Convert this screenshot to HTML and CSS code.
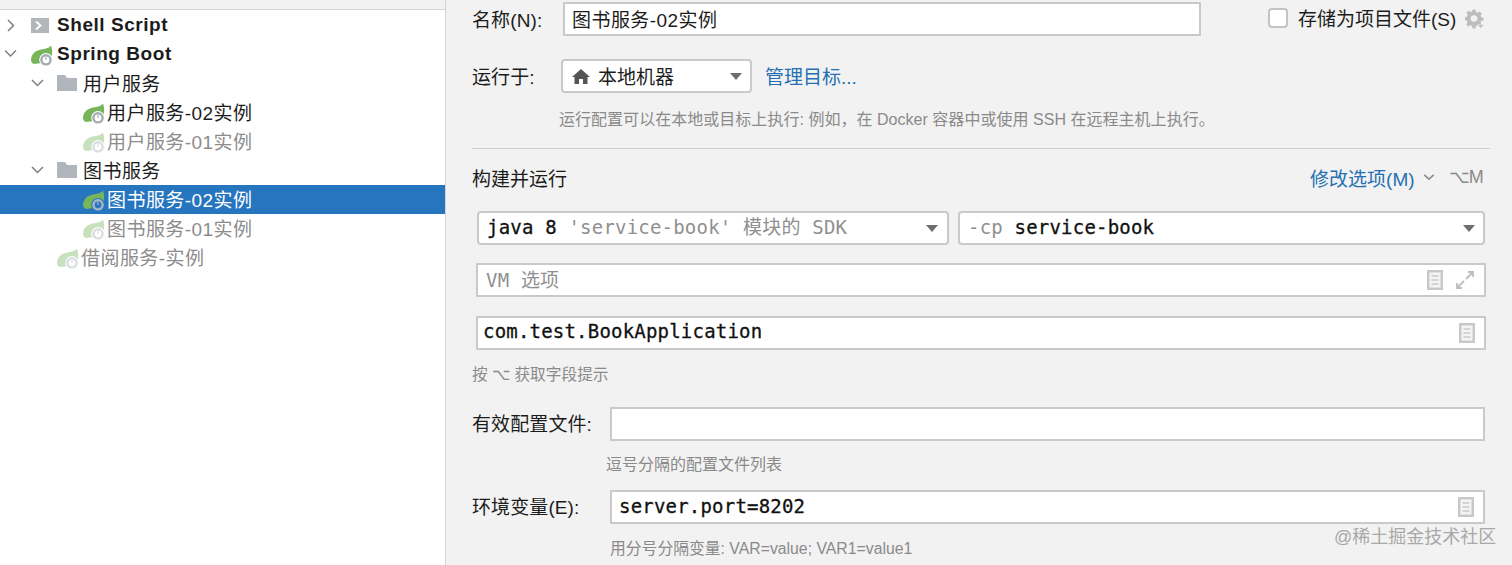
FILE: index.html
```html
<!DOCTYPE html>
<html lang="zh">
<head>
<meta charset="utf-8">
<title>运行配置</title>
<link rel="stylesheet" href="styles.css">
</head>
<body>
<svg class="defs" width="0" height="0" aria-hidden="true">
  <symbol id="spring" viewBox="0 0 22 22">
    <path class="leaf" d="M0 16.500C0 9.500 5 6.500 10 5.500 14 4.800 17.500 4.500 20 1.500 22 8 21.500 13 18 18L3 20C1.500 19.500 .3 18 0 16.500Z"/>
    <circle class="halo" cx="15" cy="15.800" r="6.800"/>
    <circle class="ring" cx="15" cy="15.800" r="5.800"/>
    <circle class="hole" cx="15" cy="15.800" r="3.400"/>
    <path class="tick" d="M15 13v3"/>
  </symbol>
  <symbol id="chev-down" viewBox="0 0 14 8"><path d="M1.500 1.500 7 6.500l5.500-5"/></symbol>
  <symbol id="doc" viewBox="0 0 16 20">
    <rect class="doc-frame" x="1.200" y="1.200" width="13.600" height="17.600"/>
    <path class="doc-lines" d="M4.500 6h7M4.500 10h7M4.500 14h7"/>
  </symbol>
</svg>

<aside class="tree">
  <div class="tree-top"></div>
  <ul class="tree-list">
    <li class="row lv0 strong">
      <svg class="tw" viewBox="0 0 26 29"><path d="M3 9 8.500 14.500 3 20"/></svg>
      <svg class="ico-shell" viewBox="0 0 18 15"><rect width="18" height="15"/><path d="M5 3.500 9.500 7.500 5 11.500"/></svg>
      <span>Shell Script</span>
    </li>
    <li class="row lv0 strong">
      <svg class="tw" viewBox="0 0 26 29"><path d="M0 10.500 5.500 16 11 10.500"/></svg>
      <svg class="ico-spring"><use href="#spring"/></svg>
      <span>Spring Boot</span>
    </li>
    <li class="row lv1">
      <svg class="tw" viewBox="0 0 26 29"><path d="M1 11 6.500 16.500 12 11"/></svg>
      <svg class="ico-folder" viewBox="0 0 20 16"><path d="M0 0h8l2 3h10v13H0Z"/></svg>
      <span>用户服务</span>
    </li>
    <li class="row lv2">
      <svg class="ico-child"><use href="#spring"/></svg>
      <span>用户服务-02实例</span>
    </li>
    <li class="row lv2 off">
      <svg class="ico-child"><use href="#spring"/></svg>
      <span>用户服务-01实例</span>
    </li>
    <li class="row lv1">
      <svg class="tw" viewBox="0 0 26 29"><path d="M1 11 6.500 16.500 12 11"/></svg>
      <svg class="ico-folder" viewBox="0 0 20 16"><path d="M0 0h8l2 3h10v13H0Z"/></svg>
      <span>图书服务</span>
    </li>
    <li class="row lv2 selected">
      <svg class="ico-child"><use href="#spring"/></svg>
      <span>图书服务-02实例</span>
    </li>
    <li class="row lv2 off">
      <svg class="ico-child"><use href="#spring"/></svg>
      <span>图书服务-01实例</span>
    </li>
    <li class="row lv1b off">
      <svg class="ico-child"><use href="#spring"/></svg>
      <span>借阅服务-实例</span>
    </li>
  </ul>
</aside>

<main class="form">
  <div class="field f-name">
    <label class="lbl lbl-name">名称(N):</label>
    <div class="input input-name"><span class="grow">图书服务-02实例</span></div>
    <span class="check"></span>
    <span class="check-text">存储为项目文件(S)</span>
    <svg class="gear" viewBox="0 0 20 20">
      <path d="M8 0h3l.5 2.600 1.800.8L15.500 2l2.200 2.200-1.400 2.200.7 1.800 2.500.5v3l-2.500.5-.7 1.800 1 1.500H14l-1 1-1.500 1.200L11 20H8l-.5-2.600-1.800-.8-2.200 1.400-2.200-2.200 1.400-2.200-.8-1.800L-.5 11V8l2.600-.5.8-1.800L1.500 3.500l2.200-2.200 2.200 1.400 1.600-.7Zm1.500 6a3.500 3.500 0 1 0 0 7 3.500 3.500 0 0 0 0-7Z" fill-rule="evenodd"/>
      <path d="M13.500 16h6l-3 3.500Z"/>
    </svg>
  </div>

  <div class="field f-run">
    <label class="lbl lbl-run">运行于:</label>
    <div class="select select-run">
      <svg class="home" viewBox="0 0 18 15"><path d="M9 0 18 8h-2.500v7h-4.500v-5H7v5H2.500V8H0Z"/></svg>
      <span class="grow">本地机器</span>
      <i class="caret"></i>
    </div>
    <a class="link link-manage">管理目标...</a>
  </div>

  <p class="hint hint-run">运行配置可以在本地或目标上执行: 例如，在 Docker 容器中或使用 SSH 在远程主机上执行。</p>
  <hr class="divider">

  <div class="section">
    <span class="section-title">构建并运行</span>
    <a class="link modify">修改选项(M)</a>
    <svg class="modify-chev"><use href="#chev-down"/></svg>
    <span class="shortcut">⌥M</span>
  </div>

  <div class="select-pair">
    <div class="select select-sdk mono">
      <span class="grow"><span class="mono-b">java 8</span> <span class="dim">'service-book' 模块的 SDK</span></span>
      <i class="caret"></i>
    </div>
    <div class="select select-cp mono">
      <span class="grow"><span class="dim">-cp</span> <span class="mono-b">service-book</span></span>
      <i class="caret"></i>
    </div>
  </div>

  <div class="input wide f-vm mono dim-input">
    <span class="grow vm-text">VM 选项</span>
    <svg class="doc"><use href="#doc"/></svg>
    <svg class="expand" viewBox="0 0 20 20"><path d="M11 9 18 2M13 2h5v5M9 11 2 18M2 13v5h5"/></svg>
  </div>

  <div class="input wide f-main mono">
    <span class="grow value mono-b">com.test.BookApplication</span>
    <svg class="doc"><use href="#doc"/></svg>
  </div>

  <p class="hint hint-key">按 ⌥ 获取字段提示</p>

  <div class="field f-profile">
    <label class="lbl lbl-form">有效配置文件:</label>
    <div class="input input-form"></div>
  </div>
  <p class="hint hint-profile">逗号分隔的配置文件列表</p>

  <div class="field f-env">
    <label class="lbl lbl-form">环境变量(E):</label>
    <div class="input input-form mono">
      <span class="grow mono-b">server.port=8202</span>
      <svg class="doc"><use href="#doc"/></svg>
    </div>
  </div>
  <p class="hint hint-env">用分号分隔变量: VAR=value; VAR1=value1</p>
</main>

<div class="watermark">@稀土掘金技术社区</div>
</body>
</html>
```

FILE: styles.css
```css
* { box-sizing: border-box; }

html, body { height: 100%; }

body {
  margin: 0;
  width: 1512px;
  height: 565px;
  overflow: hidden;
  display: flex;
  position: relative;
  background: #f2f2f2;
  color: #1c1c1c;
  font-family: "Liberation Sans", "Noto Sans CJK SC", sans-serif;
  font-size: 19px;
}

.defs { position: absolute; }

/* tree */
.tree {
  width: 446px;
  flex: none;
  background: #fff;
  border-right: 1px solid #d4d4d4;
}

.tree-top {
  height: 10px;
  background: #f2f2f2;
  border-bottom: 1px solid #d6d6d6;
}

.tree-list {
  list-style: none;
  margin: 1px 0 0;
  padding: 0;
}

.row {
  height: 29px;
  display: flex;
  align-items: center;
  white-space: nowrap;
  letter-spacing: .45px;
}

.row span { margin-bottom: 2px; }

.lv0 { padding-left: 5px; }
.lv1 { padding-left: 31px; }
.lv2 { padding-left: 83px; }
.lv1b { padding-left: 57px; }

.strong { font-weight: 700; letter-spacing: .55px; }
.strong span { margin-bottom: 1px; }

.tw {
  width: 26px;
  height: 29px;
  flex: none;
  fill: none;
  stroke: #7f7f7f;
  stroke-width: 1.500;
}

.ico-shell {
  width: 18px;
  height: 15px;
  margin-right: 8px;
  flex: none;
}
.ico-shell rect { fill: #b3b6b9; }
.ico-shell path { fill: none; stroke: #fff; stroke-width: 1.800; }

.ico-spring {
  width: 22px;
  height: 22px;
  margin-right: 4px;
  flex: none;
}

.ico-folder {
  width: 20px;
  height: 16px;
  margin-right: 6px;
  margin-top: -2px;
  flex: none;
  fill: #b0b6bc;
}

.ico-child {
  width: 22px;
  height: 22px;
  margin-right: 2px;
  flex: none;
}

.leaf { fill: #76b55a; }
.halo { fill: var(--halo, #fff); }
.ring { fill: var(--ring, #a3adb3); }
.hole { fill: var(--hole, #fff); }
.tick { fill: none; stroke: var(--ring, #a3adb3); stroke-width: 1.200; }

.off { color: #8c8c8c; }
.off .ico-child { opacity: .4; }

.selected {
  background: #2675bf;
  color: #fff;
  --halo: #2675bf;
  --ring: #a8b6c2;
  --hole: #2675bf;
}

/* form */
.form {
  flex: 1;
  min-width: 0;
  padding-left: 26px;
  display: flex;
  flex-direction: column;
}

.field {
  display: flex;
  align-items: center;
  flex: none;
}

.lbl { flex: none; margin-bottom: 2px; letter-spacing: .1px; }
.lbl-name { width: 91px; }
.lbl-run { width: 89px; }
.lbl-form { width: 138px; margin-bottom: 3px; }

.input,
.select {
  background: #fff;
  display: flex;
  align-items: center;
  flex: none;
}

.input { border: 2px solid #c9c9c9; border-radius: 1px; }
.select { border: 2px solid #c9c9c9; border-radius: 4px; }

.grow { flex: 1; min-width: 0; white-space: pre; margin-bottom: 2px; }
.value { margin-bottom: 4px; }
.vm-text { margin-bottom: 0; }

.f-name { margin-top: 2px; height: 34px; }
.input-name { width: 638px; height: 34px; padding-left: 7px; letter-spacing: .45px; }

.check {
  width: 20px;
  height: 20px;
  margin-left: 67px;
  margin-top: -2px;
  border: 2px solid #c4c4c4;
  border-radius: 4px;
  background: #fff;
  flex: none;
}
.check-text { margin-left: 10px; margin-top: -3px; white-space: nowrap; }
.gear { width: 19px; height: 20px; margin-left: 9px; flex: none; fill: #bdbdbd; }

.f-run { margin-top: 23px; height: 34px; }
.select-run { width: 191px; height: 34px; padding: 0 8px 0 9px; }
.home { width: 18px; height: 15px; margin-right: 8px; fill: #555; flex: none; }

.caret {
  width: 0;
  height: 0;
  flex: none;
  border-left: 6.500px solid transparent;
  border-right: 6.500px solid transparent;
  border-top: 7px solid #6e6e6e;
}

.link { color: #2470b3; white-space: nowrap; }
.link-manage { margin-left: 13px; margin-bottom: 2px; }

.hint {
  margin: 0;
  color: #8a8a8a;
  font-size: 16px;
  line-height: 22px;
  white-space: nowrap;
  flex: none;
}

.hint-run { margin: 16px 0 0 87px; letter-spacing: .03px; }

.divider {
  width: 1018px;
  height: 1px;
  margin: 17px 0 0;
  border: 0;
  background: #cfcfcf;
  flex: none;
}

.section {
  margin-top: 16px;
  height: 24px;
  display: flex;
  align-items: center;
  flex: none;
  width: 1011px;
}
.section-title { flex: 1; }
.modify-chev { width: 12px; height: 8px; margin-left: 8px; fill: none; stroke: #8a8a8a; stroke-width: 1.800; flex: none; }
.shortcut { margin-left: 14px; color: #8a8a8a; font-size: 18px; letter-spacing: -.8px; }

.select-pair {
  display: flex;
  gap: 9px;
  margin: 22px 0 0 5px;
  flex: none;
}

.mono { font-family: "DejaVu Sans Mono", "Noto Sans CJK SC", monospace; font-size: 19px; letter-spacing: .2px; line-height: 24px; }
.mono-b { color: #111; -webkit-text-stroke: .3px #111; }
.dim { color: #8f8f8f; }
.dim-input { color: #8f8f8f; }

.select-sdk { width: 472px; height: 34px; padding: 0 9px 0 8px; }
.select-cp { width: 527px; height: 34px; padding: 0 8px 0 8px; }

.wide { width: 1010px; margin-left: 4px; height: 34px; }
.f-vm { margin-top: 18px; padding: 0 9px 0 8px; }
.f-main { margin-top: 19px; padding: 0 9px 0 5px; }

.doc { width: 16px; height: 20px; flex: none; }
.doc-frame { fill: #f4f4f4; stroke: #c8c8c8; stroke-width: 2.500; }
.doc-lines { fill: none; stroke: #b5b5b5; stroke-width: 1.200; }

.expand {
  width: 20px;
  height: 20px;
  margin-left: 12px;
  flex: none;
  fill: none;
  stroke: #bdbdbd;
  stroke-width: 1.800;
}

.hint-key { margin-top: 15px; line-height: 20px; font-size: 15.700px; }

.f-profile { margin-top: 22px; height: 34px; }
.input-form { width: 875px; height: 34px; padding: 0 9px 0 7px; }

.hint-profile { margin: 14px 0 0 134px; line-height: 20px; }

.f-env { margin-top: 15px; height: 34px; }

.hint-env { margin: 15px 0 0 138px; line-height: 20px; font-size: 15.800px; }

.watermark {
  position: absolute;
  left: 1334px;
  top: 526px;
  color: #a8a8a8;
  font-size: 18px;
  line-height: 22px;
  white-space: nowrap;
}
```
